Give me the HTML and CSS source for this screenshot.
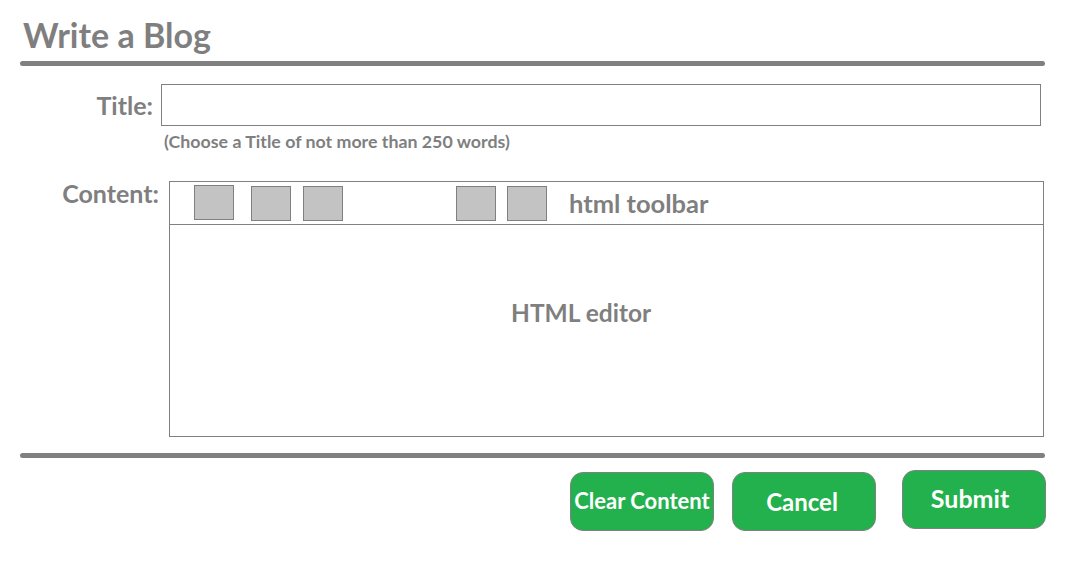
FILE: index.html
```html
<!DOCTYPE html>
<html>
<head>
<meta charset="utf-8">
<link rel="stylesheet" href="styles.css">
</head>
<body>
<div class="page">
  <h1 class="heading">Write a Blog</h1>
  <div class="rule"></div>
  <div class="title-row">
    <label class="label title-label">Title:</label>
    <div class="title-input"></div>
  </div>
  <div class="hint">(Choose a Title of not more than 250 words)</div>
  <div class="content-row">
    <label class="label content-label">Content:</label>
    <div class="editor">
      <div class="toolbar">
        <span class="tool t1"></span>
        <span class="tool t2"></span>
        <span class="tool t3"></span>
        <span class="tool t4"></span>
        <span class="tool t5"></span>
        <span class="toolbar-text">html toolbar</span>
      </div>
      <div class="editor-body">HTML editor</div>
    </div>
  </div>
  <div class="rule rule-bottom"></div>
  <div class="actions">
    <button class="btn btn-clear">Clear Content</button>
    <button class="btn btn-cancel">Cancel</button>
    <button class="btn btn-submit">Submit</button>
  </div>
</div>
</body>
</html>
```
FILE: styles.css
```css
* { box-sizing: border-box; }
html, body { margin: 0; padding: 0; background: #ffffff; }
body {
  font-family: "Lato", "Open Sans", "Liberation Sans", sans-serif;
  font-weight: 700;
  color: #7f7f7f;
}
.page {
  width: 1075px;
  padding: 0 0 0 20px;
}
.heading {
  margin: 0;
  padding: 13px 0 0 3px;
  height: 61px;
  font-size: 34px;
  line-height: 44px;
  font-weight: 700;
  color: #7f7f7f;
}
.rule {
  width: 1025px;
  height: 5px;
  background: #808080;
  border-radius: 3px;
}
.title-row {
  display: flex;
  align-items: center;
  margin-top: 18px;
  height: 42px;
}
.label {
  font-size: 25px;
  color: #7f7f7f;
  text-align: right;
}
.title-label {
  width: 133px;
}
.title-input {
  margin-left: 8px;
  width: 880px;
  height: 42px;
  border: 1px solid #808080;
}
.hint {
  margin: 4px 0 0 144px;
  font-size: 17.8px;
  line-height: 22px;
  color: #7f7f7f;
}
.content-row {
  display: flex;
  align-items: flex-start;
  margin-top: 29px;
}
.content-label {
  width: 139px;
  line-height: 24px;
}
.editor {
  margin-left: 10px;
  width: 875px;
  height: 256px;
  border: 1px solid #808080;
  display: flex;
  flex-direction: column;
}
.toolbar {
  height: 43px;
  border-bottom: 1px solid #808080;
  display: flex;
  align-items: flex-start;
  padding: 3px 0 0 24px;
}
.tool {
  width: 40px;
  height: 35px;
  background: #c3c3c3;
  border: 1px solid #808080;
  flex: none;
}
.t2 { margin-left: 17px; margin-top: 1px; }
.t3 { margin-left: 12px; margin-top: 1px; }
.t4 { margin-left: 113px; margin-top: 1px; }
.t5 { margin-left: 11px; margin-top: 1px; }
.toolbar-text {
  margin-left: 22px;
  font-size: 25.5px;
  line-height: 36px;
  color: #7f7f7f;
}
.editor-body {
  flex: 1;
  padding: 73px 0 0 341px;
  font-size: 24.5px;
  line-height: 30px;
  color: #7f7f7f;
}
.rule-bottom {
  margin-top: 16px;
}
.actions {
  display: flex;
  align-items: flex-start;
  padding-left: 550px;
  margin-top: 14px;
}
.btn {
  font-family: "Lato", "Open Sans", "Liberation Sans", sans-serif;
  font-weight: 700;
  color: #ffffff;
  background: #22b14c;
  border: 1px solid #808080;
  border-radius: 13px;
  height: 59px;
  width: 144px;
  padding: 0;
  display: flex;
  align-items: center;
  justify-content: center;
}
.btn-clear {
  font-size: 22px;
  padding-bottom: 3px;
  white-space: nowrap;
}
.btn-cancel {
  margin-left: 18px;
  font-size: 24px;
  padding-right: 4px;
}
.btn-submit {
  margin-left: 26px;
  margin-top: -2px;
  font-size: 25px;
  padding-bottom: 3px;
  padding-right: 8px;
}
```
